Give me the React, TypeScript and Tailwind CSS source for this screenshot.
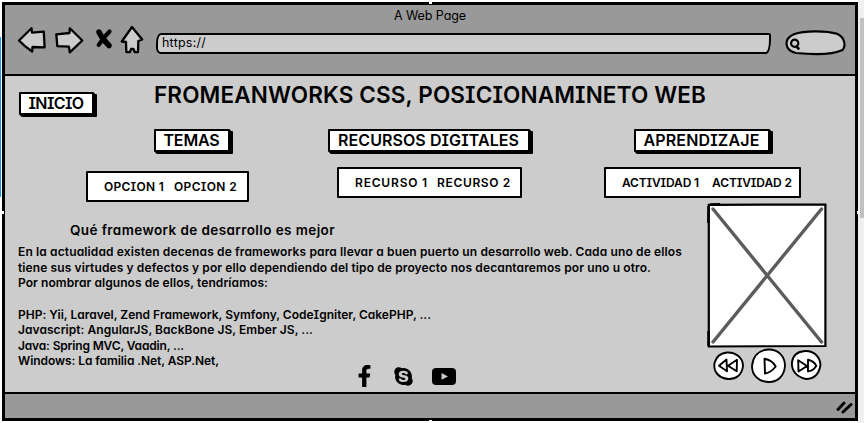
import { useLayoutEffect, useRef, useState } from "react";
import type { ReactNode } from "react";
import { FaFacebookF, FaSkype } from "react-icons/fa";

const face = "font-['Inter','Noto_Sans',sans-serif] [font-feature-settings:'cv08','cv11','calt'_0] [font-kerning:normal]";

/* One line of text whose letter spacing is adjusted to fill `width`. */
function Line({ children, width, className = "" }: { children: string; width: number; className?: string }) {
  const ref = useRef<HTMLSpanElement>(null);
  const [spacing, setSpacing] = useState(0);
  useLayoutEffect(() => {
    if (!ref.current) return;
    const natural = ref.current.getBoundingClientRect().width - spacing * children.length;
    setSpacing((width - natural) / children.length);
  }, [children, width]);
  return (
    <span ref={ref} className={`block w-max whitespace-pre ${className}`} style={{ letterSpacing: `${spacing}px` }}>
      {children}
    </span>
  );
}

function Tab({ children, width, className }: { children: string; width: number; className: string }) {
  return (
    <div
      className={`flex h-[23px] shrink-0 items-center justify-center rounded-[1px] border-2 border-black bg-white pr-[1px] pb-[1px] text-[16px] leading-none font-semibold shadow-[1px_1px_0_#000,2px_2px_0_#000,3px_2px_0_#000] ${className}`}
    >
      <Line width={width}>{children}</Line>
    </div>
  );
}

function Menu({ children, className }: { children: ReactNode; className: string }) {
  return (
    <div className={`flex h-[31px] shrink-0 items-center rounded-[1px] border-2 border-black bg-white text-[12px] leading-none font-semibold ${className}`}>
      {children}
    </div>
  );
}

function Toolbar() {
  return (
    <div className="flex h-[30px] items-start">
      <svg className="ml-[12px] h-[30px] w-[130px] shrink-0" viewBox="17 24 130 30" fill="#ccc" stroke="#000" strokeWidth="2.3" strokeLinejoin="round" strokeLinecap="round">
        <path d="M19 39.5 31.5 27.3 32 31.7 43.8 30.7 44.6 46.3 32.5 46 32.2 50.5Q24 45 19 39.5Z" />
        <path d="M56.3 33.3 69.5 32 69.8 27.3 82.3 39.5 69.8 51.4 68.9 45.6 57.3 45.2Z" />
        <path d="M99 31Q102 37.5 109 44.5" strokeWidth="5.5" fill="none" />
        <path d="M109.5 30.5Q103 37 98.7 44" strokeWidth="4.2" fill="none" />
        <path d="M132 26 142.2 38.5 138.3 40 138 51.2 134.8 51.2 133.5 48 131 48 130 51.2 126.3 51 126 41 121.8 40.5Z" />
      </svg>
      <div className="mt-[8px] ml-[9px] flex h-[21px] w-[615px] shrink-0 items-center rounded-[5px_2px_5px_5px/10px_2px_14px_6px] border-[2.5px] border-black bg-[#ccc] pl-[4px] text-[12.5px] leading-none">
        <Line width={44}>https://</Line>
      </div>
      <svg className="mt-[3px] ml-[13px] h-[28px] w-[62px] shrink-0" viewBox="784 28 62 28" fill="#ccc" stroke="#000" strokeWidth="2.2">
        <path d="M796 53C784.5 50 783 39 794 34.2 804 30.3 827 30.5 837 33.8 846 38 845.5 47 842.5 50 832 55 812 54.5 796 53Z" />
        <circle cx="794.7" cy="43.2" r="3.6" />
        <path d="m796 46.2 3.3 3" strokeWidth="2.6" />
      </svg>
    </div>
  );
}

function ImagePlaceholder() {
  return (
    <svg className="h-[145px] w-[121px]" viewBox="707 203 121 145" fill="none">
      <path d="M708.8 204.8 825.4 204.6 825.4 346 708.8 346.5Z" fill="#fff" stroke="#000" strokeWidth="2.2" />
      <path d="M708.6 206 708.4 223M710 204.7 720 204.4M708.6 331v15" stroke="#000" strokeWidth="2.7" />
      <path d="M713 209 821.5 342M821.5 209 713 342" stroke="#5c5c5c" strokeWidth="3.4" strokeLinecap="round" />
    </svg>
  );
}

function PlayerControls() {
  return (
    <svg className="ml-[5px] h-[36px] w-[112px]" viewBox="712 348 112 36" fill="#fff" stroke="#000" strokeWidth="1.9" strokeLinejoin="round">
      <path d="M727 352.5C736 352 743 358 743 366 742 375 736 379.5 728 379 719 378 713 372 714.5 363 716.5 356 721 353 727 352.5Z" />
      <path d="M719 365.7 726.5 359.5 727 371.3ZM728 365.7 737 359.7 736.7 371.2Z" />
      <path d="M768 349.5C778 349 785 356 785 366 784 377 777 382.5 768 382 758 381.5 752 375 752 366 753 356 759 350 768 349.5Z" />
      <path d="M764.5 358.8Q772 360 775.7 366.5 771 372.5 765 373.5Z" />
      <path d="M805 351C814 350.5 820 357 820.5 365 819 374 814 379 806 379 797 377 791 371 792 362 793 355 798 351.5 805 351Z" />
      <path d="M798.2 360.2 807 366 798.5 371.5ZM808 359.8Q814 361 816.3 366 813 371 808 371.4Z" />
    </svg>
  );
}

function Socials() {
  return (
    <div className="flex h-[24px] items-center">
      <FaFacebookF className="ml-[352px] h-[22px] w-[15px]" />
      <FaSkype className="ml-[21px] h-[21px] w-[21px]" />
      <svg className="ml-[18px] h-[17px] w-[24px]" viewBox="0 0 24 17">
        <rect width="24" height="17" rx="4" />
        <path d="m9.5 5 6.5 3.5-6.5 3.3Z" fill="#ccc" />
      </svg>
    </div>
  );
}

function Article() {
  return (
    <div className="flex h-[161px] flex-col pl-[13px]">
      <div className="mt-[18px] ml-[52px] flex h-[20px] shrink-0 items-center text-[13.5px] leading-none font-semibold">
        <Line width={265}>Qué framework de desarrollo es mejor</Line>
      </div>
      <div className="mt-[3px] shrink-0 text-[12px] leading-[15.5px] font-semibold">
        <Line width={664}>En la actualidad existen decenas de frameworks para llevar a buen puerto un desarrollo web. Cada uno de ellos</Line>
        <Line width={633}>tiene sus virtudes y defectos y por ello dependiendo del tipo de proyecto nos decantaremos por uno u otro.</Line>
        <Line width={250}>Por nombrar algunos de ellos, tendríamos:</Line>
        <Line width={413} className="mt-[16px]">PHP: Yii, Laravel, Zend Framework, Symfony, CodeIgniter, CakePHP, ...</Line>
        <Line width={295}>Javascript: AngularJS, BackBone JS, Ember JS, ...</Line>
        <Line width={166}>Java: Spring MVC, Vaadin, ...</Line>
        <Line width={201}>Windows: La familia .Net, ASP.Net,</Line>
      </div>
    </div>
  );
}

/* Resize handles that sit on the frame's edges. */
function Handles() {
  return (
    <>
      <span className="absolute top-0 left-[429px] h-[4px] w-[3px] bg-white" />
      <span className="absolute top-[420px] left-[429px] h-[3px] w-[3px] bg-white" />
      <span className="absolute top-[211px] left-[2px] h-[3px] w-[2px] bg-white" />
      <span className="absolute top-[211px] left-[857px] h-[3px] w-[2px] bg-white" />
    </>
  );
}

export default function App() {
  return (
    <div className={`relative flex h-[423px] w-[864px] overflow-hidden bg-white text-black ${face}`}>
      <div className="h-full w-[2px] shrink-0 pt-[37px]">
        <div className="h-[160px] w-[1px] bg-[#2490e8]" />
      </div>
      <div className="mt-[2px] flex h-[419px] w-[856px] shrink-0 flex-col border-3 border-black bg-[#ccc]">
        <header className="h-[71px] shrink-0 border-b-2 border-black bg-[#999]">
          <div className="flex h-[20px] items-center pt-[2px] pl-[389px] text-[12.5px] leading-none">
            <Line width={72}>A Web Page</Line>
          </div>
          <Toolbar />
        </header>
        <main className="h-[316px] shrink-0">
          <div className="flex h-[53px] pt-[16px]">
            <Tab width={55} className="ml-[14px] w-[75px]">INICIO</Tab>
            <h1 className="-mt-[11px] ml-[60px] text-[22.5px] leading-[28px] font-semibold">
              <Line width={552}>FROMEANWORKS CSS, POSICIONAMINETO WEB</Line>
            </h1>
          </div>
          <nav className="flex h-[38px]">
            <Tab width={56} className="ml-[149px] w-[76px]">TEMAS</Tab>
            <Tab width={181} className="ml-[98px] w-[202px]">RECURSOS DIGITALES</Tab>
            <Tab width={116} className="ml-[104px] w-[136px]">APRENDIZAJE</Tab>
          </nav>
          <div className="flex h-[36px]">
            <Menu className="mt-[4px] ml-[81px] w-[163px] gap-[10px] pl-[16px]">
              <Line width={60}>OPCION 1</Line>
              <Line width={63}>OPCION 2</Line>
            </Menu>
            <Menu className="ml-[88px] w-[185px] gap-[9px] pl-[16px]">
              <Line width={73}>RECURSO 1</Line>
              <Line width={74}>RECURSO 2</Line>
            </Menu>
            <Menu className="ml-[82px] w-[197px] gap-[13px] pl-[16px]">
              <Line width={77}>ACTIVIDAD 1</Line>
              <Line width={80}>ACTIVIDAD 2</Line>
            </Menu>
          </div>
          <div className="flex h-[189px]">
            <div className="flex w-[702px] shrink-0 flex-col">
              <Article />
              <Socials />
            </div>
            <div className="flex flex-col">
              <ImagePlaceholder />
              <PlayerControls />
            </div>
          </div>
        </main>
        <footer className="flex h-[26px] justify-end border-t-2 border-black bg-[#999]">
          <svg className="mt-[5px] mr-[2px] h-[16px] w-[18px]" viewBox="0 0 18 16" stroke="#000" strokeLinecap="round" strokeWidth="3">
            <path d="M3 10.5 9 4M8 13 16 5.5" />
          </svg>
        </footer>
      </div>
      <div className="h-full w-[6px] bg-[#f0f0f0] pt-[18px] pl-[2px]">
        <div className="h-[200px] bg-[#c1c1c1]" />
      </div>
      <Handles />
    </div>
  );
}
